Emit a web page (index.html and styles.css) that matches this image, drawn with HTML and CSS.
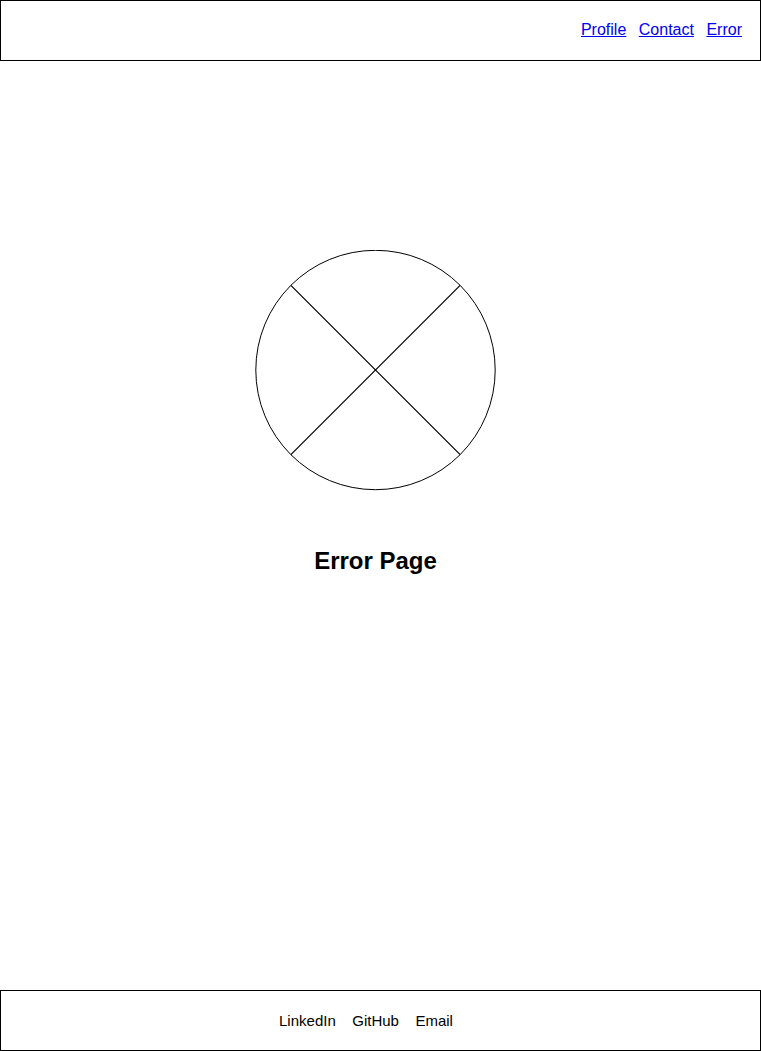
FILE: index.html
```html
<!DOCTYPE html>
<html lang="en">
<head>
<meta charset="utf-8">
<title>Error Page</title>
<link rel="stylesheet" href="styles.css">
</head>
<body>
<header class="site-header">
  <nav class="nav">
    <a class="nav-link" href="#">Profile</a>
    <a class="nav-link" href="#">Contact</a>
    <a class="nav-link" href="#">Error</a>
  </nav>
</header>
<main class="main">
  <svg class="error-icon" width="241" height="241" viewBox="0 0 241 241" aria-hidden="true">
    <circle cx="120.5" cy="120" r="119.7" fill="none" stroke="#000" stroke-width="1"/>
    <line x1="35.86" y1="35.36" x2="205.14" y2="204.64" stroke="#000" stroke-width="1.25"/>
    <line x1="205.14" y1="35.36" x2="35.86" y2="204.64" stroke="#000" stroke-width="1.25"/>
  </svg>
  <h1 class="title">Error Page</h1>
</main>
<footer class="site-footer">
  <a class="footer-link" href="#">LinkedIn</a>
  <a class="footer-link" href="#">GitHub</a>
  <a class="footer-link" href="#">Email</a>
</footer>
</body>
</html>
```
FILE: styles.css
```css
html, body {
  margin: 0;
  padding: 0;
  background: #fff;
}
body {
  font-family: "Liberation Sans", Arial, sans-serif;
  color: #000;
  display: flex;
  flex-direction: column;
  min-height: 1051px;
}
.site-header {
  box-sizing: border-box;
  height: 61px;
  border: 1px solid #000;
  display: flex;
  justify-content: flex-end;
  align-items: flex-start;
  padding: 20px 18px 0 0;
}
.nav {
  display: flex;
  gap: 12.5px;
  font-size: 16px;
}
.nav-link {
  color: #0000ee;
  text-decoration: underline;
}
.main {
  flex: 1;
  display: flex;
  flex-direction: column;
  align-items: center;
  padding: 189px 10px 0 0;
}
.error-icon {
  display: block;
}
.title {
  margin: 56px 0 0;
  font-size: 24px;
  font-weight: bold;
  line-height: 27px;
}
.site-footer {
  box-sizing: border-box;
  height: 61px;
  border: 1px solid #000;
  display: flex;
  justify-content: center;
  align-items: center;
  gap: 16.5px;
  padding-right: 29px;
  font-size: 15px;
}
.footer-link {
  color: #000;
  text-decoration: none;
}
```
